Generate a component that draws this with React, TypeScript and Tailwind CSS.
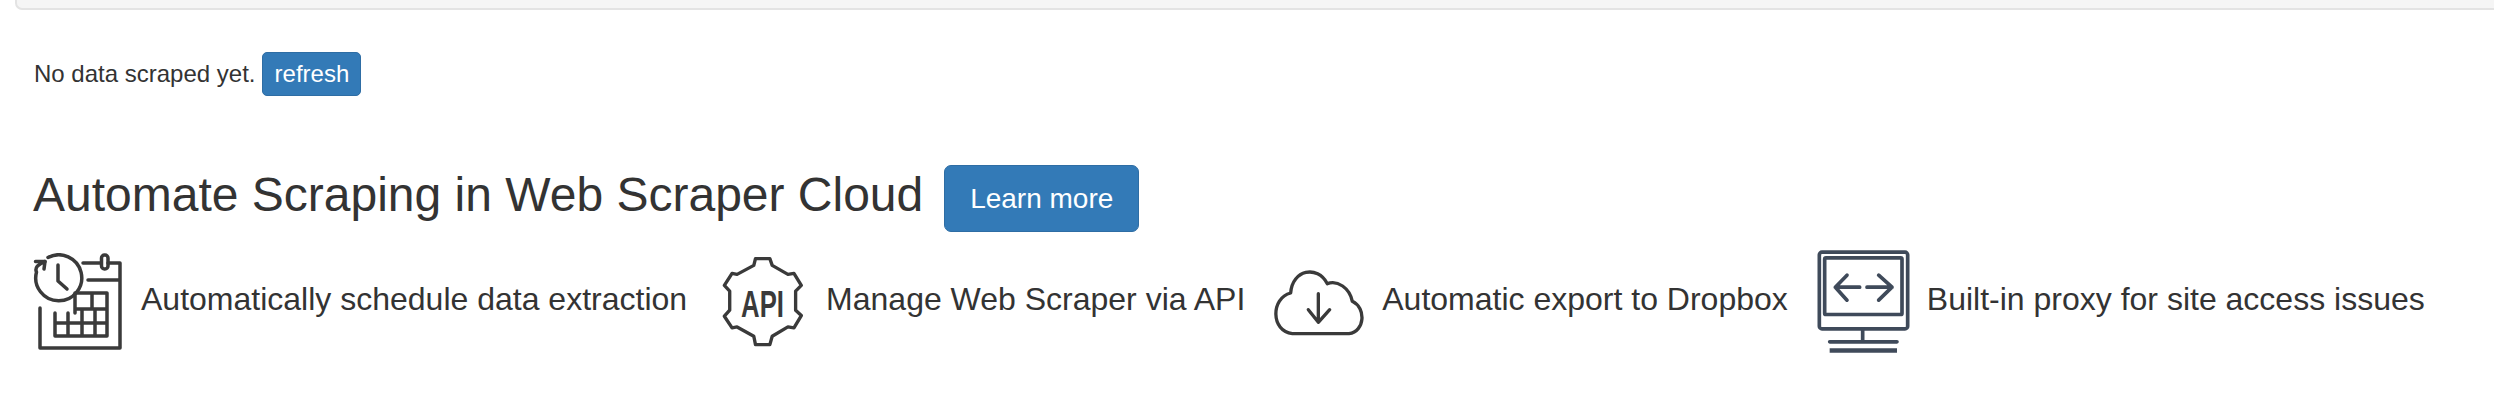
import React from 'react';

const CalendarIcon = () => (
  <svg width="90" height="98" viewBox="0 0 90 98" fill="none" stroke="#3a3a3a" strokeWidth="3.500" strokeLinecap="round" strokeLinejoin="round" className="shrink-0">
    <path d="M15 4.500A23 23 0 1 1 3.500 19C1.500 15 5 11 12 8.500" />
    <path d="M2.500 8.500H12L11 16" />
    <path d="M25 12V28L34 36" />
    <path d="M50 10H68M75 10H87V95H7V55M55 27H87" />
    <rect x="68.500" y="2" width="6.500" height="14" rx="3" />
    <path d="M42 40H74V83H22V60M42 56H74M22 70H74M59 40V56M42 40V60M62 56V83M35 60V83M49 56V83" />
  </svg>
);

const ApiIcon = () => (
  <svg width="82" height="91" viewBox="65 20 245 272" fill="none" stroke="#3a3a3a" strokeWidth="10" strokeLinejoin="round" className="shrink-0">
    <path d="M165 28H208L215 48L262 75L280 72L302 108L285 125V182L302 198L280 235L262 232L215 260L208 285H165L160 260L110 232L95 235L72 200L88 182V125L72 108L95 72L110 75L160 48Z" />
    <text x="186" y="201" textAnchor="middle" textLength="128" lengthAdjust="spacingAndGlyphs" fontFamily="'Liberation Sans', sans-serif" fontSize="108" fontWeight="700" fill="#3a3a3a" stroke="none">API</text>
  </svg>
);

const CloudIcon = () => (
  <svg width="90" height="68" viewBox="45 25 270 204" fill="none" stroke="#3a3a3a" strokeWidth="10" strokeLinecap="round" strokeLinejoin="round" className="shrink-0">
    <path d="M100 222H270C318 215 322 145 280 125C272 85 235 60 205 72C175 15 100 30 95 100C35 115 35 215 100 222Z" />
    <path d="M178 102V188M148 150L178 188L212 150" />
  </svg>
);

const MonitorIcon = () => (
  <svg width="94" height="103" viewBox="50 22 282 308" fill="none" stroke="#3f4a5a" strokeWidth="11" strokeLinecap="round" strokeLinejoin="round" className="shrink-0">
    <rect x="57" y="28" width="265" height="230" rx="8" />
    <rect x="73" y="45" width="232" height="170" rx="4" />
    <path d="M105 133H178M140 97L105 133L140 172M200 133H275M235 97L275 133L235 172M187 258V297M88 297H290" />
    <path d="M88 323H290" strokeWidth="13" strokeLinecap="butt" />
  </svg>
);

const features = [
  { icon: CalendarIcon, label: 'Automatically schedule data extraction', cls: 'gap-[18px] mr-[35px]' },
  { icon: ApiIcon, label: 'Manage Web Scraper via API', cls: 'gap-[22px] mr-[29px]' },
  { icon: CloudIcon, label: 'Automatic export to Dropbox', cls: 'gap-[18px] mr-[29px]' },
  { icon: MonitorIcon, label: 'Built-in proxy for site access issues', cls: 'gap-[16px]' },
];

function App() {
  return (
    <div className="min-h-[414px] bg-white text-[#333333] font-['Liberation_Sans',Arial,sans-serif] overflow-hidden">
      {/* Panel above, only its lower edge is in view */}
      <div className="ml-[15px] h-[10px] bg-[#f5f5f5] border-b-2 border-l-2 border-[#e3e3e3] rounded-bl-[7px]" />

      <div className="pl-[33px]">
        {/* Scraped data */}
        <div className="mt-[42px] flex items-center h-[44px] text-[24px]">
          <span className="ml-[1px]">No data scraped yet.</span>
          <button className="ml-[7px] w-[99px] h-[44px] bg-[#337ab7] border border-[#2e6da4] rounded-[5px] text-white text-[24px] leading-none">
            refresh
          </button>
        </div>

        {/* Cloud promo */}
        <div className="mt-[69px] flex items-center h-[67px]">
          <h3 className="text-[48px] leading-none font-normal -mt-[7px]">Automate Scraping in Web Scraper Cloud</h3>
          <button className="ml-[21px] w-[195px] h-[67px] bg-[#337ab7] border border-[#2e6da4] rounded-[7px] text-white text-[28px] leading-none">
            Learn more
          </button>
        </div>

        <div className="mt-[18px] flex items-center text-[32px] leading-none">
          {features.map(f => {
            const Icon = f.icon;
            return (
              <div key={f.label} className={`flex items-center shrink-0 ${f.cls}`}>
                <Icon />
                <span className="whitespace-nowrap -mt-[5px]">{f.label}</span>
              </div>
            );
          })}
        </div>
      </div>
    </div>
  );
}

export default App;
